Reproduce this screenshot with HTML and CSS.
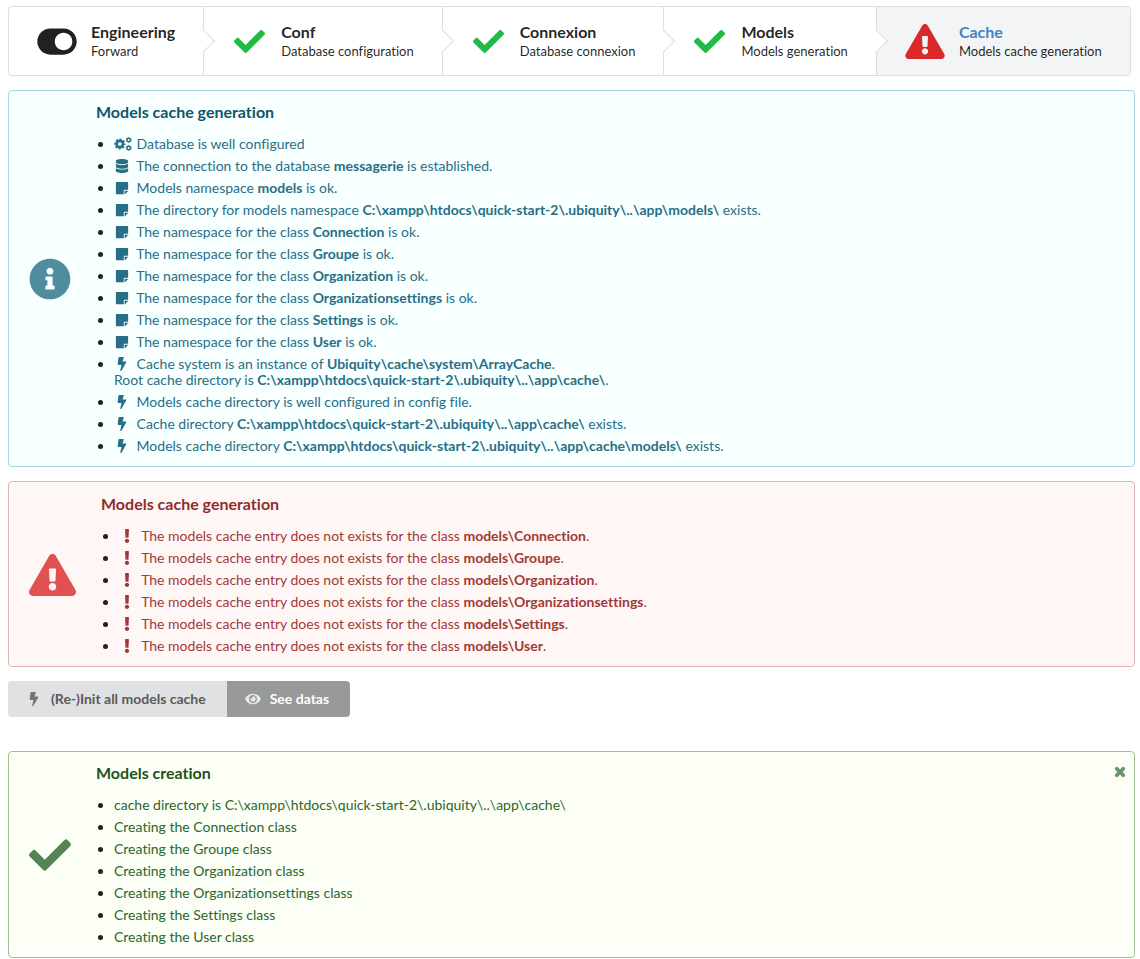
FILE: index.html
```html
<!DOCTYPE html>
<html lang="en">
<head>
<meta charset="utf-8">
<title>Models cache generation</title>
<link rel="stylesheet" href="styles.css">
</head>
<body>
<svg class="sprite" aria-hidden="true">
  <symbol id="check" viewBox="0 0 512 512"><path d="M173.898 439.404l-166.4-166.4c-9.997-9.997-9.997-26.206 0-36.204l36.203-36.204c9.997-9.998 26.207-9.998 36.204 0L192 312.69 432.095 72.596c9.997-9.997 26.207-9.997 36.204 0l36.203 36.204c9.997 9.997 9.997 26.206 0 36.204l-294.4 294.401c-9.998 9.997-26.207 9.997-36.204-.001z"/></symbol>
  <symbol id="warning" viewBox="0 0 576 512"><path d="M569.517 440.013C587.975 472.007 564.806 512 527.94 512H48.054c-36.937 0-59.999-40.055-41.577-71.987L246.423 23.985c18.467-32.009 64.72-31.951 83.154 0l239.94 416.028zM288 354c-25.405 0-46 20.595-46 46s20.595 46 46 46 46-20.595 46-46-20.595-46-46-46zm-43.673-165.346l7.418 136c.347 6.364 5.609 11.346 11.982 11.346h48.546c6.373 0 11.635-4.982 11.982-11.346l7.418-136c.375-6.874-5.098-12.654-11.982-12.654h-63.383c-6.884 0-12.356 5.78-11.981 12.654z"/></symbol>
  <symbol id="info" viewBox="0 0 512 512"><path d="M256 8C119.043 8 8 119.083 8 256c0 136.997 111.043 248 248 248s248-111.003 248-248C504 119.083 392.957 8 256 8zm0 110c23.196 0 42 18.804 42 42s-18.804 42-42 42-42-18.804-42-42 18.804-42 42-42zm56 254c0 6.627-5.373 12-12 12h-88c-6.627 0-12-5.373-12-12v-24c0-6.627 5.373-12 12-12h12v-64h-12c-6.627 0-12-5.373-12-12v-24c0-6.627 5.373-12 12-12h64c6.627 0 12 5.373 12 12v100h12c6.627 0 12 5.373 12 12v24z"/></symbol>
  <symbol id="toggle" viewBox="0 0 576 512"><path d="M384 64H192C86 64 0 150 0 256s86 192 192 192h192c106 0 192-86 192-192S490 64 384 64zm0 320c-70.8 0-128-57.3-128-128 0-70.8 57.3-128 128-128 70.8 0 128 57.3 128 128 0 70.8-57.3 128-128 128z"/></symbol>
  <symbol id="note" viewBox="0 0 448 512"><path d="M312 320h136V56c0-13.3-10.7-24-24-24H24C10.700 32 0 42.700 0 56v400c0 13.300 10.700 24 24 24h264V344c0-13.200 10.800-24 24-24zm129 55l-98 98c-4.500 4.500-10.600 7-17 7h-6V352h128v6.100c0 6.300-2.500 12.400-7 16.900z"/></symbol>
  <symbol id="database" viewBox="0 0 448 512"><path d="M448 73.143v45.714C448 159.143 347.667 192 224 192S0 159.143 0 118.857V73.143C0 32.857 100.333 0 224 0s224 32.857 224 73.143zM448 176v102.857C448 319.143 347.667 352 224 352S0 319.143 0 278.857V176c48.125 33.143 136.208 48.572 224 48.572S399.874 209.143 448 176zm0 160v102.857C448 479.143 347.667 512 224 512S0 479.143 0 438.857V336c48.125 33.143 136.208 48.572 224 48.572S399.874 369.143 448 336z"/></symbol>
  <symbol id="bolt" viewBox="0 0 320 512"><path d="M296 160H180.6l42.6-129.8C227.2 15 215.7 0 200 0H56C44 0 33.8 8.9 32.2 20.8l-32 240C-1.7 275.2 9.5 288 24 288h118.7L96.6 482.5c-3.600 15.200 8 29.500 23.300 29.500 8.400 0 16.400-4.400 20.800-12l176-304c9.300-15.900-2.200-36-20.700-36z"/></symbol>
  <symbol id="exclamation" viewBox="0 0 192 512"><path d="M176 432c0 44.112-35.888 80-80 80s-80-35.888-80-80 35.888-80 80-80 80 35.888 80 80zM25.260 25.199l13.600 272C39.499 309.972 50.041 320 62.830 320h66.340c12.789 0 23.331-10.028 23.970-22.801l13.600-272C167.425 11.490 156.496 0 142.770 0H49.230C35.504 0 24.575 11.490 25.260 25.199z"/></symbol>
  <symbol id="eye" viewBox="0 0 576 512"><path d="M572.52 241.4C518.29 135.59 410.93 64 288 64S57.68 135.64 3.48 241.41a32.35 32.35 0 0 0 0 29.19C57.71 376.41 165.07 448 288 448s230.32-71.64 284.52-177.41a32.35 32.35 0 0 0 0-29.19zM288 400a144 144 0 1 1 144-144 143.93 143.93 0 0 1-144 144zm0-240a95.31 95.31 0 0 0-25.31 3.79 47.85 47.85 0 0 1-66.9 66.9A95.78 95.78 0 1 0 288 160z"/></symbol>
  <symbol id="times" viewBox="0 0 384 384"><path d="M88 88L296 296M296 88L88 296" fill="none" stroke="currentColor" stroke-width="120" stroke-linecap="round"/></symbol>
  <symbol id="cogs" viewBox="0 0 640 512">
    <g fill="none" stroke="currentColor">
      <circle cx="205" cy="256" r="118" stroke-width="100"/>
      <circle cx="205" cy="256" r="180" stroke-width="50" stroke-dasharray="76 65.372" stroke-dashoffset="38"/>
      <circle cx="530" cy="112" r="64" stroke-width="54"/>
      <circle cx="530" cy="112" r="96" stroke-width="28" stroke-dasharray="54 46.531"/>
      <circle cx="530" cy="400" r="64" stroke-width="54"/>
      <circle cx="530" cy="400" r="96" stroke-width="28" stroke-dasharray="54 46.531"/>
    </g>
  </symbol>
</svg>

<nav class="steps" aria-label="Project steps">
  <div class="step">
    <svg class="step-icon wide"><use href="#toggle"/></svg>
    <div><div class="title">Engineering</div><div class="description">Forward</div></div>
  </div>
  <div class="step">
    <svg class="step-icon done"><use href="#check"/></svg>
    <div><div class="title">Conf</div><div class="description">Database configuration</div></div>
  </div>
  <div class="step">
    <svg class="step-icon done"><use href="#check"/></svg>
    <div><div class="title">Connexion</div><div class="description">Database connexion</div></div>
  </div>
  <div class="step">
    <svg class="step-icon done"><use href="#check"/></svg>
    <div><div class="title">Models</div><div class="description">Models generation</div></div>
  </div>
  <div class="step active" aria-current="step">
    <svg class="step-icon wide failed"><use href="#warning"/></svg>
    <div><div class="title">Cache</div><div class="description">Models cache generation</div></div>
  </div>
</nav>

<section class="message info">
  <svg class="message-icon"><use href="#info"/></svg>
  <div class="content">
    <h2 class="header">Models cache generation</h2>
    <ul class="list">
      <li><svg class="icon wide"><use href="#cogs"/></svg> Database is well configured</li>
      <li><svg class="icon"><use href="#database"/></svg> The connection to the database <b>messagerie</b> is established.</li>
      <li><svg class="icon"><use href="#note"/></svg> Models namespace <b>models</b> is ok.</li>
      <li><svg class="icon"><use href="#note"/></svg> The directory for models namespace <b>C:\xampp\htdocs\quick-start-2\.ubiquity\..\app\models\</b> exists.</li>
      <li><svg class="icon"><use href="#note"/></svg> The namespace for the class <b>Connection</b> is ok.</li>
      <li><svg class="icon"><use href="#note"/></svg> The namespace for the class <b>Groupe</b> is ok.</li>
      <li><svg class="icon"><use href="#note"/></svg> The namespace for the class <b>Organization</b> is ok.</li>
      <li><svg class="icon"><use href="#note"/></svg> The namespace for the class <b>Organizationsettings</b> is ok.</li>
      <li><svg class="icon"><use href="#note"/></svg> The namespace for the class <b>Settings</b> is ok.</li>
      <li><svg class="icon"><use href="#note"/></svg> The namespace for the class <b>User</b> is ok.</li>
      <li><svg class="icon"><use href="#bolt"/></svg> Cache system is an instance of <b>Ubiquity\cache\system\ArrayCache</b>.<br>Root cache directory is <b>C:\xampp\htdocs\quick-start-2\.ubiquity\..\app\cache\</b>.</li>
      <li><svg class="icon"><use href="#bolt"/></svg> Models cache directory is well configured in config file.</li>
      <li><svg class="icon"><use href="#bolt"/></svg> Cache directory <b>C:\xampp\htdocs\quick-start-2\.ubiquity\..\app\cache\</b> exists.</li>
      <li><svg class="icon"><use href="#bolt"/></svg> Models cache directory <b>C:\xampp\htdocs\quick-start-2\.ubiquity\..\app\cache\models\</b> exists.</li>
    </ul>
  </div>
</section>

<section class="message error">
  <svg class="message-icon wide failed"><use href="#warning"/></svg>
  <div class="content">
    <h2 class="header">Models cache generation</h2>
    <ul class="list">
      <li><svg class="icon"><use href="#exclamation"/></svg> The models cache entry does not exists for the class <b>models\Connection</b>.</li>
      <li><svg class="icon"><use href="#exclamation"/></svg> The models cache entry does not exists for the class <b>models\Groupe</b>.</li>
      <li><svg class="icon"><use href="#exclamation"/></svg> The models cache entry does not exists for the class <b>models\Organization</b>.</li>
      <li><svg class="icon"><use href="#exclamation"/></svg> The models cache entry does not exists for the class <b>models\Organizationsettings</b>.</li>
      <li><svg class="icon"><use href="#exclamation"/></svg> The models cache entry does not exists for the class <b>models\Settings</b>.</li>
      <li><svg class="icon"><use href="#exclamation"/></svg> The models cache entry does not exists for the class <b>models\User</b>.</li>
    </ul>
  </div>
</section>

<div class="buttons">
  <button type="button" class="button"><svg class="button-icon"><use href="#bolt"/></svg>(Re-)Init all models cache</button>
  <button type="button" class="button secondary"><svg class="button-icon"><use href="#eye"/></svg>See datas</button>
</div>

<section class="message success">
  <svg class="message-icon"><use href="#check"/></svg>
  <div class="content">
    <h2 class="header">Models creation</h2>
    <ul class="list">
      <li>cache directory is C:\xampp\htdocs\quick-start-2\.ubiquity\..\app\cache\</li>
      <li>Creating the Connection class</li>
      <li>Creating the Groupe class</li>
      <li>Creating the Organization class</li>
      <li>Creating the Organizationsettings class</li>
      <li>Creating the Settings class</li>
      <li>Creating the User class</li>
    </ul>
  </div>
  <button type="button" class="close" aria-label="Close"><svg class="close-icon"><use href="#times"/></svg></button>
</section>
</body>
</html>
```
FILE: styles.css
```css
* {
  box-sizing: border-box;
}

body {
  margin: 0;
  padding: 6px 5px 0 8px;
  background: #fff;
  color: rgba(0, 0, 0, 0.87);
  font-family: Lato, "Liberation Sans", sans-serif;
  font-size: 14px;
  font-variant-ligatures: no-common-ligatures;
  line-height: 16px;
}

svg {
  fill: currentColor;
}

.sprite {
  display: none;
}

/* Steps */
.steps {
  display: flex;
  width: fit-content;
  margin-bottom: 14px;
  border: 1px solid #dededf;
  border-radius: 4px;
}

.step {
  position: relative;
  display: flex;
  align-items: center;
  gap: 14px;
  padding: 15px 28px;
  border-right: 1px solid #dededf;
}

.step:first-child {
  border-radius: 4px 0 0 4px;
}

.step:last-child {
  border-right: 0;
  border-radius: 0 4px 4px 0;
}

.step:not(:last-child)::after {
  content: "";
  position: absolute;
  z-index: 1;
  top: 50%;
  left: 100%;
  width: 16px;
  height: 16px;
  background: #fff;
  border: solid #dededf;
  border-width: 0 1px 1px 0;
  transform: translate(-50%, -50%) rotate(-45deg);
}

.step.active {
  background: #f3f4f5;
}

.step-icon {
  flex: none;
  width: 35px;
  height: 35px;
}

.step-icon.wide {
  width: 40px;
}

.step-icon.done {
  padding: 2px;
}

.title {
  font-size: 16px;
  font-weight: 700;
  line-height: 20px;
}

.active .title {
  color: #4183c4;
}

.description {
  font-size: 13px;
  line-height: 18px;
}

.done {
  color: #21ba45;
}

.failed {
  color: #db2828;
}

/* Messages */
.message {
  display: flex;
  align-items: center;
  gap: 25px;
  position: relative;
  margin-bottom: 14px;
  padding: 12px 20px;
  border: 1px solid;
  border-radius: 4px;
}

.message:last-child {
  margin-bottom: 0;
}

.message-icon {
  flex: none;
  width: 42px;
  height: 42px;
  opacity: 0.8;
}

.message-icon.wide {
  width: 47px;
}

.content {
  flex: 1;
}

.header {
  margin: 0 0 15px;
  font-size: 16px;
  font-weight: 700;
  line-height: 18px;
}

.info {
  background: #f8ffff;
  border-color: #a9d5de;
  color: #276f86;
}

.info .header {
  color: #0e566c;
}

.error {
  padding-top: 13px;
  background: #fff6f6;
  border-color: #e0b4b4;
  color: #9f3a38;
}

.error .header {
  color: #912d2b;
}

.success {
  background: #fcfff5;
  border-color: #a3c293;
  color: #2c662d;
}

.success .header {
  color: #1a531b;
}

.list {
  display: grid;
  gap: 6px;
  margin: 0;
  padding: 0 0 0 18px;
  list-style: none;
}

.list li::before {
  content: "";
  display: inline-block;
  width: 5px;
  height: 5px;
  margin: 0 11px 0 -16px;
  border-radius: 50%;
  background: #212121;
  vertical-align: 2px;
}

.icon {
  width: 16px;
  height: 14px;
  margin-right: 3px;
  vertical-align: -2px;
}

.icon.wide {
  width: 18px;
  margin-right: 1px;
}

.close {
  position: absolute;
  top: 14px;
  right: 8px;
  display: flex;
  padding: 0;
  border: 0;
  background: none;
  color: inherit;
  opacity: 0.7;
}

.close-icon {
  width: 12px;
  height: 12px;
}

/* Buttons */
.buttons {
  display: flex;
  margin-bottom: 34px;
}

.button {
  display: flex;
  align-items: center;
  gap: 9px;
  height: 36px;
  padding: 0 21px 0 18px;
  border: 0;
  border-radius: 4px 0 0 4px;
  background: #e0e1e2;
  color: #5a5a5b;
  font: inherit;
  font-weight: 700;
}

.button.secondary {
  border-radius: 0 4px 4px 0;
  background: #989999;
  color: #fff;
}

.button-icon {
  width: 16px;
  height: 14px;
  opacity: 0.8;
}
```
